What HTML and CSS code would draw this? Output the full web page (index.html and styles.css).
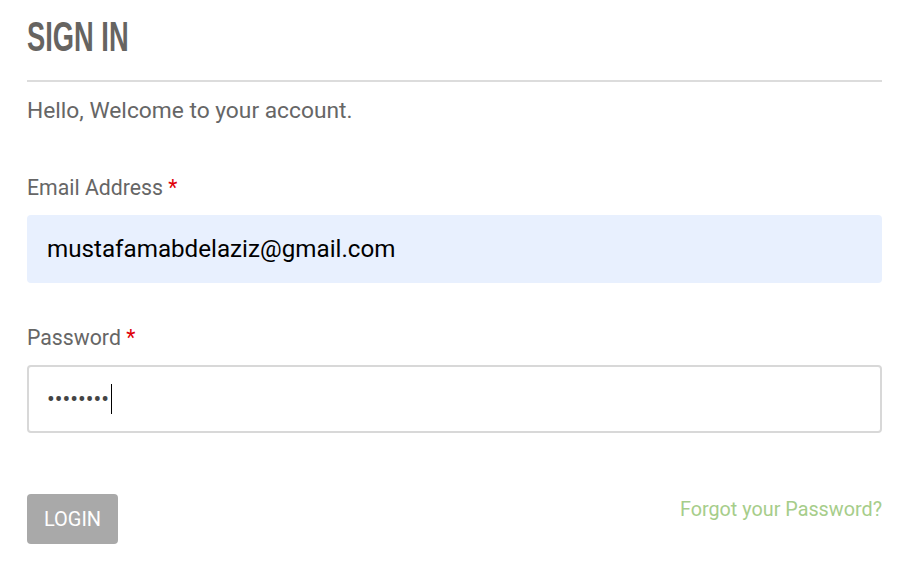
FILE: index.html
```html
<!DOCTYPE html>
<html lang="en">
<head>
<meta charset="utf-8">
<title>Sign In</title>
<link rel="stylesheet" href="styles.css">
</head>
<body>
<main class="signin">
  <h1 class="signin__title"><span class="signin__title-text">SIGN IN</span></h1>
  <p class="signin__intro">Hello, Welcome to your account.</p>
  <form class="signin__form" onsubmit="return false">
    <div class="field">
      <label class="field__label">Email Address <span class="field__req">*</span></label>
      <div class="field__input field__input--filled">mustafamabdelaziz@gmail.com</div>
    </div>
    <div class="field">
      <label class="field__label">Password <span class="field__req">*</span></label>
      <div class="field__input field__input--bordered"><span class="field__dots">••••••••</span><span class="field__caret"></span></div>
    </div>
    <div class="signin__actions">
      <button class="btn-login" type="submit">LOGIN</button>
      <a class="signin__forgot" href="#">Forgot your Password?</a>
    </div>
  </form>
</main>
</body>
</html>
```
FILE: styles.css
```css
html, body {
  margin: 0;
  padding: 0;
  background: #fff;
}
body {
  font-family: Roboto, "Liberation Sans", Arial, sans-serif;
  color: #666;
}
.signin {
  padding: 0 16px 0 27px;
}
.signin__title {
  margin: 0;
  padding-top: 16px;
  height: 82px;
  box-sizing: border-box;
  border-bottom: 2px solid #dcdcdc;
  font-family: "Liberation Sans Narrow", "Liberation Sans", sans-serif;
  font-weight: 700;
  font-size: 42px;
  line-height: 42px;
  color: #666461;
}
.signin__title-text {
  display: inline-block;
  transform: scaleX(0.65);
  transform-origin: left center;
}
.signin__intro {
  margin: 15px 0 0;
  font-size: 22.75px;
  line-height: 27px;
  color: #666;
}
.signin__form {
  display: flex;
  flex-direction: column;
}
.field {
  display: flex;
  flex-direction: column;
  gap: 14px;
}
.field:first-child {
  margin-top: 51px;
}
.field + .field {
  margin-top: 42px;
}
.field__label {
  font-size: 21.25px;
  line-height: 26px;
  color: #666;
}
.field__req {
  color: #e0000a;
}
.field__input {
  box-sizing: border-box;
  height: 68px;
  border-radius: 4px;
  padding: 0 18px;
  display: flex;
  align-items: center;
  font-size: 24.2px;
  color: #000;
}
.field__input--filled {
  background: #e8f0fe;
  padding-left: 20px;
}
.field__input--bordered {
  border: 2px solid #d8d8d8;
  background: #fff;
}
.field__dots {
  font-size: 23px;
  color: #444;
}
.field__caret {
  display: inline-block;
  width: 1px;
  height: 30px;
  background: #000;
  margin-left: 2px;
}
.signin__actions {
  margin-top: 61px;
  display: flex;
  justify-content: space-between;
  align-items: flex-start;
}
.btn-login {
  width: 91px;
  height: 50px;
  border: 0;
  border-radius: 4px;
  background: #a9a9a9;
  color: #fff;
  font-family: Roboto, sans-serif;
  font-size: 20px;
  padding: 0;
}
.signin__forgot {
  margin-top: 4px;
  font-size: 19.8px;
  line-height: 24px;
  color: #a6cd8a;
  text-decoration: none;
}
```
